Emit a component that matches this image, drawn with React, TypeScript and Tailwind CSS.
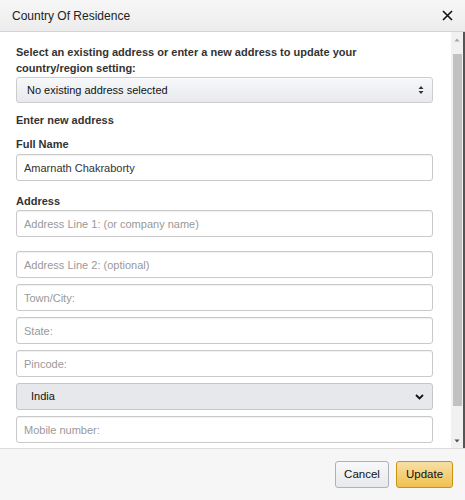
import React from "react";

const inputCls =
  "h-[27px] w-full rounded-[3px] border border-[#c9c9c9] bg-white px-[7px] text-[11px] text-[#333] shadow-[inset_0_1px_1px_rgba(0,0,0,0.06)] placeholder:text-[#999] outline-none";

function Field({ placeholder, value }: { placeholder?: string; value?: string }) {
  return <input className={inputCls} placeholder={placeholder} defaultValue={value} />;
}

export default function App() {
  return (
    <div
      className="flex h-[500px] w-[465px] flex-col overflow-hidden bg-white text-[#333]"
      style={{ fontFamily: '"Liberation Sans", Arial, sans-serif' }}
    >
      {/* Header */}
      <div className="flex h-[32px] shrink-0 items-center justify-between border-b border-[#d5d5d5] bg-gradient-to-b from-[#f7f7f7] to-[#ececec] pl-[12px] pr-[10px]">
        <span className="text-[12px] text-[#222]">Country Of Residence</span>
        <svg width="11" height="11" viewBox="0 0 11 11" className="mr-[2px]">
          <path d="M1 1 L10 10 M10 1 L1 10" stroke="#111" strokeWidth="1.6" />
        </svg>
      </div>

      {/* Body */}
      <div className="flex min-h-0 flex-1">
        <div className="flex-1 pl-[16px] pr-[18px] pt-[12px]">
          <p className="text-[11px] font-bold leading-[16px] text-[#333]">
            Select an existing address or enter a new address to update your
            <br />
            country/region setting:
          </p>
          <div className="mt-[1px] flex h-[26px] items-center justify-between rounded-[3px] border border-[#cdcdcd] bg-gradient-to-b from-[#f7f8fa] to-[#e7e9ec] pl-[10px] pr-[8px] shadow-[0_1px_0_rgba(255,255,255,0.6)_inset]">
            <span className="text-[11px] text-[#111]">No existing address selected</span>
            <svg width="6" height="10" viewBox="0 0 6 10">
              <path d="M0.5 4 L3 1 L5.5 4 Z M0.5 6 L3 9 L5.5 6 Z" fill="#333" />
            </svg>
          </div>
          <p className="mt-[9px] text-[11px] font-bold leading-[16px]">Enter new address</p>
          <p className="mt-[8px] text-[11px] font-bold leading-[16px]">Full Name</p>
          <div className="mt-[2px]">
            <Field value="Amarnath Chakraborty" />
          </div>
          <p className="mt-[12px] text-[11px] font-bold leading-[16px]">Address</p>
          <div className="mt-[1px] flex flex-col gap-[6px]">
            <Field placeholder="Address Line 1: (or company name)" />
            <div className="mt-[8px]">
              <Field placeholder="Address Line 2: (optional)" />
            </div>
            <Field placeholder="Town/City:" />
            <Field placeholder="State:" />
            <Field placeholder="Pincode:" />
            <div className="flex h-[27px] items-center justify-between rounded-[3px] border border-[#c4c6c9] bg-[#e6e8eb] pl-[14px] pr-[8px]">
              <span className="text-[11px] text-[#111]">India</span>
              <svg width="9" height="6" viewBox="0 0 9 6">
                <path d="M1 1 L4.5 4.5 L8 1" stroke="#111" strokeWidth="1.8" fill="none" />
              </svg>
            </div>
            <Field placeholder="Mobile number:" />
          </div>
        </div>
        {/* Scrollbar */}
        <div className="flex w-[12px] shrink-0 flex-col items-center bg-[#f1f1f1]">
          <svg width="8" height="8" viewBox="0 0 8 8" className="mt-[4px]">
            <path d="M1.5 5.5 L4 2.5 L6.5 5.5 Z" fill="#a3a3a3" />
          </svg>
          <div className="mt-[10px] h-[352px] w-[9px] bg-[#c1c1c1]" />
          <div className="flex-1" />
          <svg width="8" height="8" viewBox="0 0 8 8" className="mb-[3px]">
            <path d="M1.5 2.5 L4 5.5 L6.5 2.5 Z" fill="#505050" />
          </svg>
        </div>
        <div className="w-[2px] shrink-0 bg-[#555]" />
      </div>

      {/* Footer */}
      <div className="flex h-[52px] shrink-0 items-start justify-end gap-[7px] border-t border-[#dcdcdc] bg-[#f6f6f6] pr-[12px] pt-[12px]">
        <button className="h-[27px] w-[54px] rounded-[3px] border border-[#adb1b8] bg-gradient-to-b from-[#f7f8fa] to-[#e7e9ec] text-[11.5px] text-[#111]">
          Cancel
        </button>
        <button className="h-[27px] w-[57px] rounded-[3px] border border-[#c89411] bg-gradient-to-b from-[#f7dfa5] to-[#f0c14b] text-[11.5px] text-[#111]">
          Update
        </button>
      </div>
    </div>
  );
}
